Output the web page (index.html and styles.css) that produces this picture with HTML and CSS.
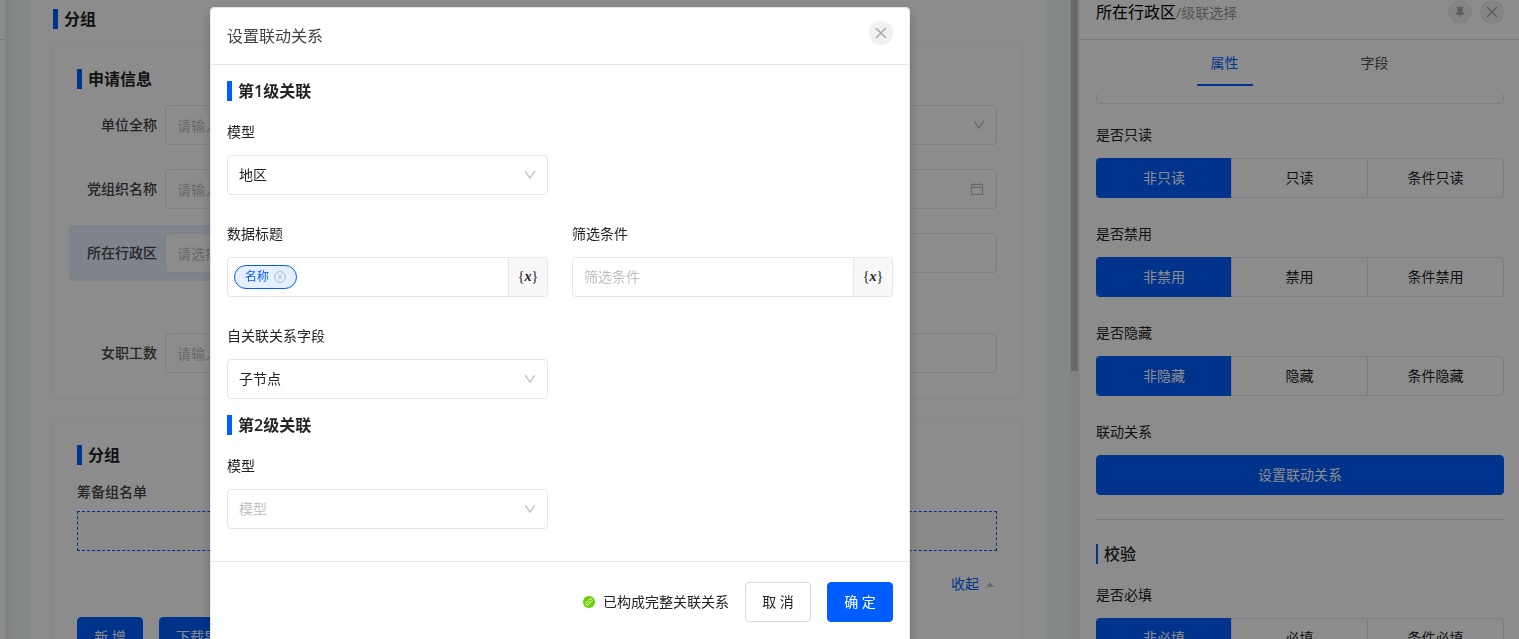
FILE: index.html
```
<!DOCTYPE html>
<html lang="zh-CN">
<head>
<meta charset="utf-8">
<meta name="viewport" content="width=device-width, initial-scale=1">
<title>设置联动关系</title>
<link rel="stylesheet" href="styles.css">
</head>
<body>
<svg class="sprite" aria-hidden="true">
  <symbol id="i-down" viewBox="0 0 12 12"><path d="M1.200 2.200 6 9.200l4.800-7" fill="none" stroke="currentColor" stroke-width="1.300"/></symbol>
  <symbol id="i-close" viewBox="0 0 12 12"><path d="M1 1l10 10M11 1 1 11" fill="none" stroke="currentColor" stroke-width="1.500"/></symbol>
  <symbol id="i-calendar" viewBox="0 0 14 14"><path d="M1.500 2.500h11v10h-11zM1.500 5.500h11M4.500 1v3M9.500 1v3" fill="none" stroke="currentColor" stroke-width="1.200"/></symbol>
  <symbol id="i-pin" viewBox="0 0 12 12"><path d="M2.800.8h6.400v1.400h-.7v3.600L10 7.200v1.500H6.600v2.500H5.400V8.700H2V7.200l1.500-1.400V2.200h-.7z" fill="currentColor"/></symbol>
  <symbol id="i-clear" viewBox="0 0 12 12"><circle cx="6" cy="6" r="5.400" fill="none" stroke="currentColor"/><path d="M4 4l4 4M8 4 4 8" stroke="currentColor"/></symbol>
  <symbol id="i-link" viewBox="0 0 12 12"><circle cx="6" cy="6" r="6" fill="#66d000"/><g fill="none" stroke="#fff" stroke-width=".9"><path d="M5 4.700 6.400 3.300a1.600 1.600 0 0 1 2.300 2.300L7.300 7"/><path d="M7 7.300 5.600 8.700a1.600 1.600 0 0 1-2.300-2.300L4.700 5"/><path d="M4.900 7.100l2.200-2.200"/></g></symbol>
</svg>

<div class="page">
  <aside class="rail"><div class="rail-head"></div></aside>
  <div class="canvas">
    <main class="form">
      <h2 class="heading">分组</h2>
      <section class="card">
        <h3 class="heading">申请信息</h3>
        <div class="row">
          <div class="item"><label for="unit">单位全称</label><input class="control" id="unit" type="text" placeholder="请输入"></div>
          <div class="item"><span class="picker"><select class="control" aria-label="类型"><option></option></select><svg class="arrow"><use href="#i-down"/></svg></span></div>
        </div>
        <div class="row">
          <div class="item"><label for="party">党组织名称</label><input class="control" id="party" type="text" placeholder="请输入"></div>
          <div class="item"><span class="picker"><input class="control" type="text" aria-label="日期"><svg class="arrow cal"><use href="#i-calendar"/></svg></span></div>
        </div>
        <div class="row row-tall">
          <div class="item selected"><label for="region">所在行政区</label><input class="control" id="region" type="text" placeholder="请选择"></div>
          <div class="item"><input class="control" type="text" aria-label="地址"></div>
        </div>
        <div class="row">
          <div class="item"><label for="women">女职工数</label><input class="control" id="women" type="text" placeholder="请输入"></div>
          <div class="item"><input class="control" type="text" aria-label="人数"></div>
        </div>
      </section>
      <section class="card">
        <h3 class="heading">分组</h3>
        <div class="list-title">筹备组名单</div>
        <div class="drop"></div>
        <div class="fold"><a href="#">收起</a><i class="caret"></i></div>
        <div class="actions"><button class="btn primary" type="button">新 增</button><button class="btn primary" type="button">下载导入模板</button></div>
      </section>
    </main>
  </div>
  <div class="track"><div class="thumb"></div></div>
  <aside class="panel">
    <header class="panel-head">
      <h2 class="panel-title">所在行政区<small>/级联选择</small></h2>
      <button class="round" type="button" aria-label="固定"><svg><use href="#i-pin"/></svg></button>
      <button class="round" type="button" aria-label="关闭面板"><svg><use href="#i-close"/></svg></button>
    </header>
    <nav class="tabs"><button class="tab active" type="button">属性</button><button class="tab" type="button">字段</button></nav>
    <div class="panel-body">
      <div class="clipped"></div>
      <fieldset class="prop">
        <legend>是否只读</legend>
        <div class="segments">
          <label><input type="radio" name="readonly" checked><span>非只读</span></label>
          <label><input type="radio" name="readonly"><span>只读</span></label>
          <label><input type="radio" name="readonly"><span>条件只读</span></label>
        </div>
      </fieldset>
      <fieldset class="prop">
        <legend>是否禁用</legend>
        <div class="segments">
          <label><input type="radio" name="disabled" checked><span>非禁用</span></label>
          <label><input type="radio" name="disabled"><span>禁用</span></label>
          <label><input type="radio" name="disabled"><span>条件禁用</span></label>
        </div>
      </fieldset>
      <fieldset class="prop">
        <legend>是否隐藏</legend>
        <div class="segments">
          <label><input type="radio" name="hidden" checked><span>非隐藏</span></label>
          <label><input type="radio" name="hidden"><span>隐藏</span></label>
          <label><input type="radio" name="hidden"><span>条件隐藏</span></label>
        </div>
      </fieldset>
      <fieldset class="prop">
        <legend>联动关系</legend>
        <button class="btn primary block" type="button">设置联动关系</button>
      </fieldset>
      <hr class="rule">
      <h3 class="heading thin">校验</h3>
      <fieldset class="prop">
        <legend>是否必填</legend>
        <div class="segments">
          <label><input type="radio" name="required" checked><span>非必填</span></label>
          <label><input type="radio" name="required"><span>必填</span></label>
          <label><input type="radio" name="required"><span>条件必填</span></label>
        </div>
      </fieldset>
    </div>
  </aside>
</div>

<div class="mask">
  <div class="modal" role="dialog" aria-modal="true" aria-labelledby="modal-title">
    <header class="modal-head"><h2 class="modal-title" id="modal-title">设置联动关系</h2></header>
    <button class="round modal-close" type="button" aria-label="关闭"><svg><use href="#i-close"/></svg></button>
    <div class="modal-body">
      <h3 class="heading">第1级关联</h3>
      <div class="grid">
        <div class="field lone"><label for="model1">模型</label><span class="picker"><select class="control" id="model1"><option>地区</option></select><svg class="arrow"><use href="#i-down"/></svg></span></div>
        <div class="field">
          <label for="caption">数据标题</label>
          <div class="group">
            <div class="tags"><span class="tag">名称<svg><use href="#i-clear"/></svg></span><input id="caption" type="text"></div>
            <button class="addon" type="button">{<b>x</b>}</button>
          </div>
        </div>
        <div class="field">
          <label for="filter">筛选条件</label>
          <div class="group">
            <input class="group-input" id="filter" type="text" placeholder="筛选条件">
            <button class="addon" type="button">{<b>x</b>}</button>
          </div>
        </div>
        <div class="field lone"><label for="self">自关联关系字段</label><span class="picker"><select class="control" id="self"><option>子节点</option></select><svg class="arrow"><use href="#i-down"/></svg></span></div>
      </div>
      <h3 class="heading next">第2级关联</h3>
      <div class="grid">
        <div class="field lone"><label for="model2">模型</label><span class="picker"><select class="control empty" id="model2"><option>模型</option></select><svg class="arrow"><use href="#i-down"/></svg></span></div>
      </div>
    </div>
    <footer class="modal-foot">
      <span class="status"><svg><use href="#i-link"/></svg>已构成完整关联关系</span>
      <button class="btn" type="button">取 消</button>
      <button class="btn primary" type="button">确 定</button>
    </footer>
  </div>
</div>
</body>
</html>
```
FILE: styles.css
```
:root {
  --blue: #005dff;
  --line: #e2e6ee;
  --text: #222;
  --hint: #bfbfbf;
}
* { box-sizing: border-box; }
body {
  margin: 0;
  height: 100vh;
  overflow: hidden;
  color: var(--text);
  background: #fff;
  font: 14px/22px "Open Sans", "Noto Sans CJK SC", sans-serif;
}
h2, h3, fieldset { margin: 0; padding: 0; border: 0; }
legend { padding: 0; }
button, input, select { font: inherit; color: inherit; }
button { cursor: pointer; }
a { color: var(--blue); text-decoration: none; }
::placeholder { color: var(--hint); opacity: 1; }
.sprite { position: absolute; width: 0; height: 0; }

.page { display: flex; height: 100vh; overflow: hidden; }
.rail { width: 5px; background: #fff; }
.rail-head { height: 40px; border-bottom: 1px solid #ddd; }
.canvas {
  flex: 1;
  min-width: 0;
  padding: 0 24px;
  background: linear-gradient(90deg, #e8eaee, #f0f7f9 12px);
}
.form { min-height: 100%; padding: 9px 24px 0; background: #fff; }

.heading {
  padding-left: 6px;
  border-left: 5px solid var(--blue);
  font-size: 16px;
  line-height: 20px;
  font-weight: 600;
}
.heading.thin { border-left-width: 2px; font-weight: 500; margin-bottom: 20px; }
.card {
  margin-top: 16px;
  padding: 24px;
  border-radius: 4px;
  box-shadow: 0 0 6px rgba(0, 0, 0, .06);
}
.card + .card { margin-top: 24px; }

.row { display: grid; grid-template-columns: 1fr 1fr; gap: 24px; margin-top: 24px; }
.heading + .row { margin-top: 16px; }
.row-tall { margin-bottom: 60px; }
.row-tall + .row { margin-top: 0; }
.item { display: flex; align-items: center; gap: 8px; color: #444; }
.item > label { flex: none; width: 80px; text-align: right; font-weight: 500; }
.item.selected { margin: -8px; padding: 8px; border-radius: 4px; background: #e6efff; }
.picker { position: relative; display: block; width: 100%; }
.control {
  display: block;
  width: 100%;
  height: 40px;
  padding: 0 11px;
  border: 1px solid var(--line);
  border-radius: 4px;
  background: #fff;
  appearance: none;
}
.control.empty { color: var(--hint); }
.arrow {
  position: absolute;
  top: 14px;
  right: 12px;
  width: 12px;
  height: 12px;
  color: var(--hint);
  pointer-events: none;
}
.arrow.cal { top: 13px; right: 13px; width: 14px; height: 14px; }

.list-title { margin-top: 16px; color: #444; font-weight: 500; }
.drop { height: 40px; margin-top: 8px; border: 1px dashed var(--blue); background: #fafafa; }
.fold { display: flex; justify-content: flex-end; align-items: center; gap: 7px; margin-top: 22px; padding-right: 3px; }
.caret { border: 4px solid transparent; border-top: 0; border-bottom: 5px solid var(--hint); }
.actions { display: flex; gap: 16px; margin-top: 22px; }
.btn {
  min-width: 66px;
  height: 40px;
  padding: 0 16px;
  border: 1px solid #d9d9d9;
  border-radius: 4px;
  background: #fff;
}
.btn.primary { border-color: var(--blue); background: var(--blue); color: #fff; }
.block { width: 100%; }

.track { display: flex; justify-content: center; width: 11px; background: #f1f1f1; }
.thumb { width: 7px; height: 58%; background: #bfbfbf; }

.panel { width: 439px; background: #fff; }
.panel-head { display: flex; gap: 8px; height: 40px; padding: 0 15px 15px 16px; border-bottom: 1px solid #ddd; }
.panel-title { flex: 1; color: #000; font-size: 16px; line-height: 24px; font-weight: 400; }
.panel-title small { color: #999; font-size: 14px; }
.round {
  display: grid;
  place-items: center;
  width: 24px;
  height: 24px;
  padding: 0;
  border: 0;
  border-radius: 50%;
  background: #f0f0f0;
  color: #aaa;
}
.round svg { width: 12px; height: 12px; }
.tabs { display: flex; justify-content: center; gap: 94px; height: 46px; }
.tab { padding: 2px 14px 0; border: 0; border-bottom: 2px solid transparent; background: none; color: #555; }
.tab.active { border-color: var(--blue); color: var(--blue); }
.panel-body { padding: 8px 15px 0 16px; }
.clipped { height: 10px; margin-bottom: 20px; border: 1px solid var(--line); border-top: 0; border-radius: 0 0 4px 4px; }
.prop { margin-bottom: 25px; }
.prop legend { margin-bottom: 12px; }
.segments { display: grid; grid-template-columns: repeat(3, 1fr); }
.segments label { position: relative; }
.segments input { position: absolute; inset: 0; margin: 0; opacity: 0; }
.segments span {
  display: block;
  height: 40px;
  border: 1px solid var(--line);
  border-left-width: 0;
  line-height: 38px;
  text-align: center;
}
.segments label:first-child span { border-left-width: 1px; border-radius: 4px 0 0 4px; }
.segments label:last-child span { border-radius: 0 4px 4px 0; }
.segments input:checked + span {
  border-color: var(--blue) var(--line) var(--blue) var(--blue);
  background: var(--blue) padding-box;
  color: #fff;
}
.rule { height: 1px; margin: 24px 0; border: 0; background: #ddd; }
.prop:has(+ .rule) { margin-bottom: 0; }

.mask {
  position: fixed;
  inset: 0;
  display: flex;
  justify-content: center;
  align-items: flex-start;
  padding: 7px 399px 0 0;
  overflow: hidden;
  background: rgba(0, 0, 0, .45);
}
.modal {
  position: relative;
  flex: none;
  width: 700px;
  border: 1px solid var(--line);
  border-radius: 4px;
  background: #fff;
  box-shadow: 0 4px 12px rgba(0, 0, 0, .2);
}
.modal-head { padding: 16px; border-bottom: 1px solid var(--line); }
.modal-title { color: #444; font-size: 16px; line-height: 24px; font-weight: 400; }
.modal-close { position: absolute; top: 13px; right: 16px; }
.modal-body { padding: 16px 16px 32px; }
.heading.next { margin-top: 16px; }
.grid { display: grid; grid-template-columns: 1fr 1fr; gap: 28px 24px; margin-top: 20px; }
.lone { margin-right: calc(50% + 12px); grid-column: 1 / -1; }
.field > label { display: block; margin-bottom: 12px; }
.group { display: flex; height: 40px; border: 1px solid var(--line); border-radius: 4px; overflow: hidden; }
.group-input, .tags input { flex: 1; width: 0; min-width: 0; padding: 0 11px; border: 0; background: none; }
.tags { display: flex; flex: 1; align-items: center; padding-left: 6px; }
.tag {
  display: flex;
  align-items: center;
  gap: 5px;
  height: 24px;
  padding: 0 10px;
  border: 1px solid var(--blue);
  border-radius: 12px;
  background: #e5efff;
  color: var(--blue);
  font-size: 12px;
}
.tag svg { width: 12px; height: 12px; color: #b0b8c8; }
.addon {
  width: 39px;
  padding: 0;
  border: 0;
  border-left: 1px solid var(--line);
  background: #f8f8f8;
  font-family: "Liberation Serif", serif;
}
.addon b { font-style: italic; }
.modal-foot {
  display: flex;
  justify-content: flex-end;
  align-items: center;
  gap: 16px;
  padding: 20px 16px;
  border-top: 1px solid var(--line);
}
.status { display: flex; align-items: center; gap: 8px; }
.status svg { width: 12px; height: 12px; }
```
